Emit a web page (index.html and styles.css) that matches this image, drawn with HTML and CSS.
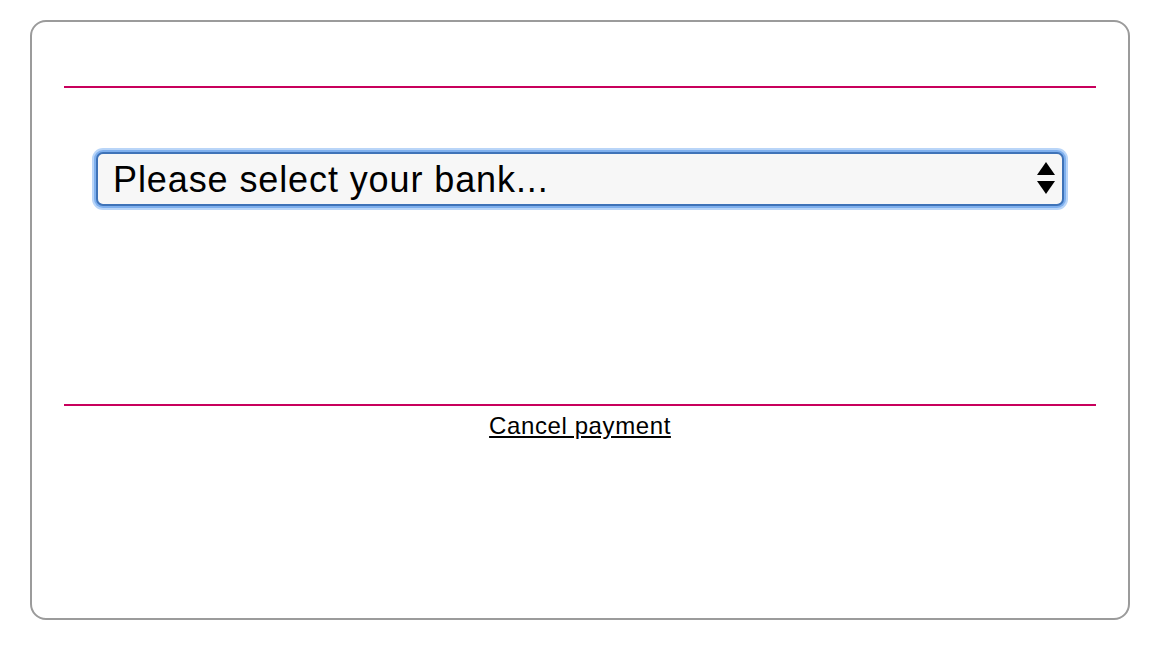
FILE: index.html
```html
<!DOCTYPE html>
<html>
<head>
<meta charset="utf-8">
<link rel="stylesheet" href="styles.css">
</head>
<body>
<div class="card">
  <hr class="rule">
  <div class="select-wrap">
    <select class="bank-select">
      <option>Please select your bank...</option>
    </select>
    <svg class="arrows" width="18" height="32" viewBox="0 0 18 32">
      <polygon points="9,0 18,13 0,13" fill="#000"/>
      <polygon points="0,19 18,19 9,32" fill="#000"/>
    </svg>
  </div>
  <hr class="rule rule-bottom">
  <div class="cancel"><a href="#">Cancel payment</a></div>
</div>
</body>
</html>
```
FILE: styles.css
```css
html, body {
  margin: 0;
  padding: 0;
  background: #fff;
}
body {
  padding: 20px 30px;
  font-family: "Liberation Sans", Arial, sans-serif;
}
.card {
  box-sizing: border-box;
  width: 1100px;
  height: 600px;
  border: 2px solid #9b9b9b;
  border-radius: 16px;
  padding: 64px 32px 0;
}
.rule {
  margin: 0;
  border: 0;
  height: 2px;
  background: #c8005c;
}
.select-wrap {
  position: relative;
  margin: 64px 32px 0;
  height: 54px;
}
.bank-select {
  -webkit-appearance: none;
  appearance: none;
  box-sizing: border-box;
  width: 100%;
  height: 54px;
  margin: 0;
  padding: 0 50px 0 15px;
  font-family: "Liberation Sans", Arial, sans-serif;
  font-size: 36px;
  letter-spacing: 0.9px;
  color: #000;
  background: #f7f7f7;
  border: 2px solid #3f73b8;
  border-radius: 7px;
  box-shadow: 0 0 0 2px #7fb0ee, 0 0 0 4px #b9d5f8;
  outline: none;
}
.arrows {
  position: absolute;
  right: 9px;
  top: 10px;
}
.rule-bottom {
  margin-top: 198px;
}
.cancel {
  text-align: center;
  margin-top: 6px;
  font-size: 24px;
  letter-spacing: 0.6px;
  line-height: 28px;
}
.cancel a {
  color: #000;
  text-decoration: underline;
}
```
